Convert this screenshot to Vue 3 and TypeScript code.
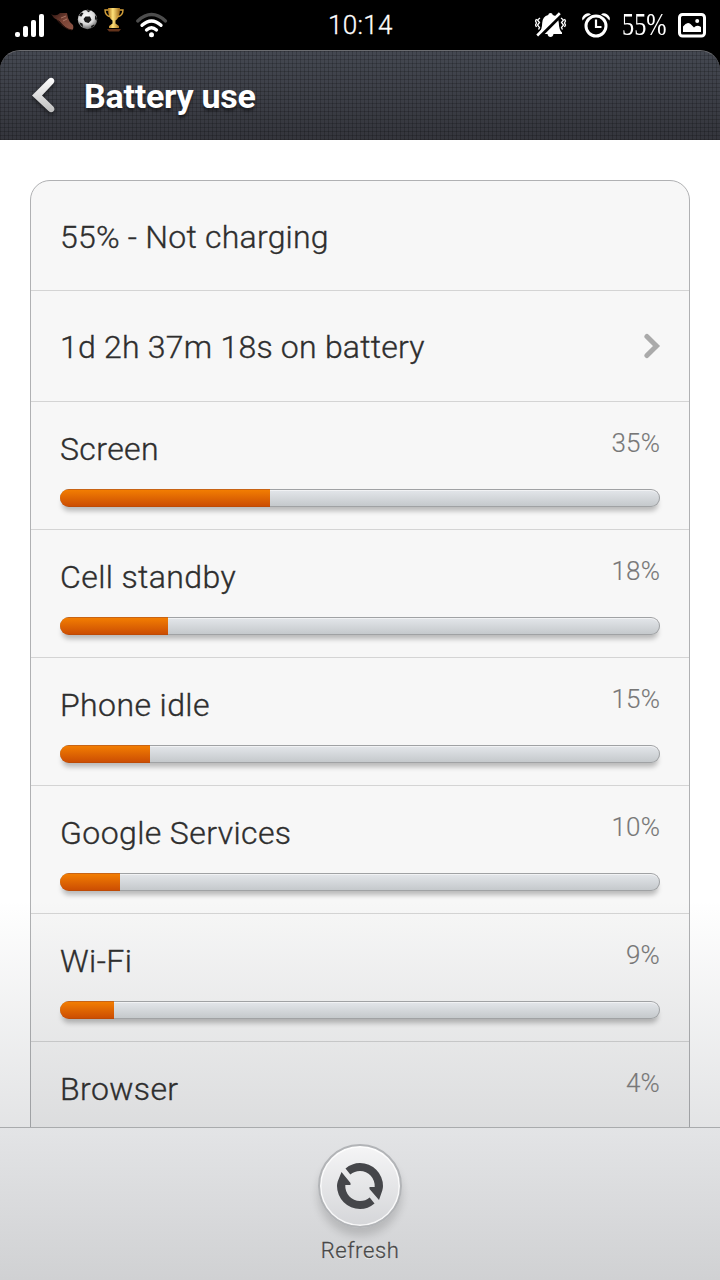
<script setup lang="ts">
interface Usage {
  name: string
  percent: number
}

const usages: Usage[] = [
  { name: 'Screen', percent: 35 },
  { name: 'Cell standby', percent: 18 },
  { name: 'Phone idle', percent: 15 },
  { name: 'Google Services', percent: 10 },
  { name: 'Wi-Fi', percent: 9 },
  { name: 'Browser', percent: 4 },
]
</script>

<template>
  <div class="phone">
    <header class="status">
      <svg class="status-left" width="180" height="50" viewBox="0 0 180 50">
        <defs>
          <linearGradient id="gold" x1="0" x2="1" y1="0" y2="0">
            <stop offset="0" stop-color="#a96f16" />
            <stop offset=".4" stop-color="#ffe27a" />
            <stop offset="1" stop-color="#9c6414" />
          </linearGradient>
          <linearGradient id="leather" x1="0" x2="1" y1="0" y2="1">
            <stop offset="0" stop-color="#2c1410" />
            <stop offset=".5" stop-color="#7a4335" />
            <stop offset="1" stop-color="#8d5546" />
          </linearGradient>
          <radialGradient id="ball" cx=".45" cy=".35" r=".65">
            <stop offset="0" stop-color="#fff" />
            <stop offset=".6" stop-color="#d8d8d8" />
            <stop offset="1" stop-color="#666" />
          </radialGradient>
        </defs>
        <g fill="#fff">
          <rect x="15" y="32" width="5" height="5" rx="2" />
          <rect x="23" y="26" width="5" height="11" rx="2" />
          <rect x="31" y="20" width="5" height="17" rx="2" />
          <rect x="39" y="14" width="5" height="23" rx="2" />
        </g>
        <path d="M51 14 Q56 17 60 13 L67 13 L68 18 Q69 22 73 25 Q74 29 72 30 Q68 30 63 25 Q59 20 54 18Z" fill="url(#leather)" />
        <path d="M61 18 l5 -2 M63 21 l4 -2" stroke="#b78170" stroke-width=".8" />
        <path d="M57 20 Q64 29 72 30" stroke="#321610" fill="none" />
        <circle cx="87.500" cy="19.500" r="9.700" fill="url(#ball)" />
        <path d="M85.500 16.500 L90 16.500 L91.500 20 L88.500 23 L85 22 L83.500 19Z M79 16 l2-3.500 2.500 .5 -2 3.500z M86 10.300 h5 l-2.500 2z M95 15 l2 3 -.5 3 -1.500-2z M79.500 22.500 l3 1 .5 3.500 q-3-1.500-3.500-4.500z M91 26 l3-1.500 .5 1 -3 2.500z" fill="#191919" />
        <path d="M108 8 h12 q0 10-4.500 12.500 v3 l3.500 2.500 v2 h-10 v-2 l3.500-2.500 v-3 Q108 18 108 8Z" fill="url(#gold)" />
        <path d="M108.500 10 h-3.500 q0 6 6 7 M119.500 10 h3.500 q0 6-6 7" fill="none" stroke="#d4a03b" stroke-width="1.400" />
        <path d="M107 29 h14 l-2 2.500 h-10z" fill="#63331b" />
        <g fill="none" stroke="#fff" stroke-linecap="round" stroke-width="3.300">
          <path d="M137.700 21 Q151.500 8.200 165.500 21" stroke="#4d4d4d" />
          <path d="M142 25.300 Q151.500 16.500 161 25.300" />
          <path d="M146.500 30 Q151.500 25.500 156.500 30" />
        </g>
        <circle cx="151.500" cy="34.700" r="2.500" fill="#fff" />
      </svg>
      <span class="clock">10:14</span>
      <div class="status-right">
        <svg width="32" height="26" viewBox="0 0 32 26">
          <path d="M15.500 1 Q17.500 1 17.800 3 Q23.500 4.500 23.800 11 Q24 18 27 20.500 V22 H18.500 Q18 25 15.500 25 Q13 25 12.500 22 H4 V20.500 Q7 18 7.200 11 Q7.500 4.500 13.200 3 Q13.500 1 15.500 1Z" fill="#fff" />
          <path d="M3.800 24.800 L26.500 2.200" stroke="#000" stroke-width="4.400" />
          <path d="M2.200 23.500 L24.800 1.300" stroke="#fff" stroke-width="2.600" />
          <path d="M5 6 l-2.500 2 2 2.500 -2 2.500 2 2.500 -1 2 M1.500 7 l-1 2 1 2 -1 2 1 2 M26 6 l2.500 2 -2 2.500 2 2.500 -2 2.500 1 2 M29.500 7 l1 2 -1 2 1 2 -1 2" fill="none" stroke="#fff" stroke-width="1.300" />
        </svg>
        <svg class="alarm" width="30" height="26" viewBox="0 0 30 26">
          <circle cx="15" cy="14" r="10" fill="none" stroke="#fff" stroke-width="3" />
          <path d="M15 7.500 V15 H20.500" fill="none" stroke="#fff" stroke-width="2.200" />
          <path d="M1.500 8.500 Q0 5 4 2.200 Q7.500 0 10 2.500 Q4.800 4.200 1.500 8.500Z M28.500 8.500 Q30 5 26 2.200 Q22.500 0 20 2.500 Q25.200 4.200 28.500 8.500Z" fill="#fff" />
        </svg>
        <span class="charge"><span class="charge-text">55%</span></span>
        <svg width="28" height="25" viewBox="0 0 28 25">
          <rect x="1.500" y="1.500" width="25" height="21.500" rx="3" fill="none" stroke="#fff" stroke-width="3" />
          <path d="M5 19 V13.500 Q9 8 12.500 11 L16 14.500 Q18.500 11.500 23 14 V19Z" fill="#fff" />
          <circle cx="19.200" cy="8" r="2" fill="#fff" />
        </svg>
      </div>
    </header>

    <div class="title-bar">
      <svg class="back" width="26" height="40" viewBox="0 0 26 40">
        <defs>
          <linearGradient id="chevron" x1="0" x2="0" y1="0" y2="1">
            <stop offset="0" stop-color="#fff" />
            <stop offset="1" stop-color="#bdbdbd" />
          </linearGradient>
        </defs>
        <path d="M17.500 3 Q20 .8 22.200 2.600 Q24.500 5 22.300 7.600 L11 19.500 L22.300 30.600 Q24.500 33.200 22.500 35.300 Q20 37.500 17.500 35 L1 19.500Z" fill="url(#chevron)" />
      </svg>
      <h1>Battery use</h1>
    </div>

    <main class="content">
      <section class="card">
        <div class="row summary"><span>55% - Not charging</span></div>
        <div class="row since">
          <span>1d 2h 37m 18s on battery</span>
          <svg class="more" width="17" height="26" viewBox="0 0 17 26">
            <path d="M2.900 3.500 L12.500 13 L2.900 22.500" fill="none" stroke="#aaa" stroke-width="5" stroke-linecap="round" />
          </svg>
        </div>
        <div v-for="item in usages" :key="item.name" class="usage">
          <div class="labels">
            <span class="name">{{ item.name }}</span>
            <span class="percent">{{ item.percent }}%</span>
          </div>
          <div class="track">
            <div class="fill" :style="{ width: item.percent + '%' }"></div>
          </div>
        </div>
      </section>
      <div class="shade"></div>
    </main>

    <footer class="toolbar">
      <button class="refresh" aria-label="Refresh">
        <svg width="48" height="48" viewBox="0 0 48 48" fill="#45464a">
          <path d="M9.500 6.500 Q16 1 24 1 A23 23 0 0 1 47 24 Q47 26 46.300 28.500 L43 38 L33.500 27 V25 H38.700 A15 15 0 0 0 24 9 Q18.500 9 14.300 12.500Z" />
          <path d="M38.500 41.500 Q32 47 24 47 A23 23 0 0 1 1 24 Q1 22 1.700 19.500 L5.500 10 L14.500 21 V23 H9.300 A15 15 0 0 0 24 39 Q29.500 39 33.700 35.500Z" />
        </svg>
      </button>
      <span class="refresh-label">Refresh</span>
    </footer>
  </div>
</template>

<style>
body {
  margin: 0;
  background: #000;
}
</style>

<style scoped>
.phone {
  width: 720px;
  height: 1280px;
  display: flex;
  flex-direction: column;
  overflow: hidden;
  background: #000;
  font-family: Roboto, "Noto Sans", sans-serif;
}
.status {
  height: 50px;
  flex: none;
  display: grid;
  grid-template-columns: 180px 1fr 185px;
  color: #fff;
}
.clock {
  padding-left: 148px;
  font-size: 26px;
  font-weight: 300;
  line-height: 50px;
  letter-spacing: 0.3px;
  -webkit-text-stroke: 0.3px #fff;
}
.status-right {
  display: flex;
  align-items: center;
}
.alarm {
  margin-left: 14px;
}
.charge {
  width: 45px;
  margin: 0 11px 2px;
  font: 32px/48px "Liberation Serif", serif;
}
.charge-text {
  display: inline-block;
  transform: scaleX(0.76);
  transform-origin: left;
}
.title-bar {
  box-sizing: border-box;
  height: 90px;
  flex: none;
  display: flex;
  align-items: center;
  padding-left: 31px;
  border-top: 1px solid #6b6c70;
  border-radius: 20px 20px 0 0;
  background:
    repeating-linear-gradient(0deg, rgba(0, 0, 0, 0.18) 0 1px, transparent 1px 4px),
    repeating-linear-gradient(90deg, rgba(0, 0, 0, 0.18) 0 1px, transparent 1px 4px),
    linear-gradient(#444851, #34353c);
}
.back {
  filter: drop-shadow(0 2px 2px rgba(0, 0, 0, 0.5));
}
h1 {
  margin: 0 0 0 27px;
  color: #fff;
  font-size: 34px;
  font-weight: 700;
  line-height: 44px;
  letter-spacing: -0.25px;
  text-shadow: 0 3px 3px rgba(0, 0, 0, 0.5);
}
.content {
  position: relative;
  height: 987px;
  flex: none;
  box-sizing: border-box;
  padding: 40px 30px 0;
  overflow: hidden;
  background: #fff;
}
.card {
  box-sizing: border-box;
  height: 1100px;
  border: 1px solid #b0b1b3;
  border-radius: 20px;
  background: #f7f7f7;
  color: #2e2e2e;
  font-size: 32px;
  font-weight: 300;
  letter-spacing: 0.23px;
  -webkit-text-stroke: 0.35px currentColor;
}
.row {
  box-sizing: border-box;
  display: flex;
  align-items: center;
  justify-content: space-between;
  padding: 2px 28px 0 29px;
  border-bottom: 1px solid #d4d4d4;
}
.summary {
  height: 110px;
}
.since {
  height: 111px;
}
.more {
  margin-bottom: 2px;
}
.usage {
  box-sizing: border-box;
  height: 128px;
  padding: 25px 29px 0;
  border-bottom: 1px solid #d4d4d4;
}
.labels {
  position: relative;
  z-index: 1;
  height: 62px;
  display: flex;
  justify-content: space-between;
}
.name {
  line-height: 44px;
  letter-spacing: 0.4px;
}
.percent {
  color: #777;
  font-size: 26px;
  line-height: 33px;
  letter-spacing: 0.15px;
  -webkit-text-stroke-width: 0.15px;
}
.track {
  position: relative;
  z-index: 1;
  box-sizing: border-box;
  height: 18px;
  border-radius: 9px;
  background: linear-gradient(#e5e8ec, #c3c7ca);
  box-shadow:
    inset 0 0 0 1px #a0a2a4,
    inset 0 2px 0 #f1f2f4,
    0 6px 5px -2px rgba(0, 0, 0, 0.25);
  overflow: hidden;
}
.fill {
  height: 18px;
  background: linear-gradient(#c86415 0 1px, #f27d02 1px, #cc4e03 17px, #be4a05 17px);
}
.shade {
  position: absolute;
  inset: auto 0 0;
  height: 227px;
  pointer-events: none;
  background: linear-gradient(rgba(45, 52, 62, 0), rgba(45, 52, 62, 0.135));
}
.toolbar {
  box-sizing: border-box;
  height: 153px;
  flex: none;
  display: flex;
  flex-direction: column;
  align-items: center;
  padding-top: 16px;
  border-top: 1px solid #a9abad;
  background: linear-gradient(#e3e4e6, #d0d1d3);
}
.refresh {
  box-sizing: border-box;
  width: 84px;
  height: 84px;
  padding: 0;
  display: grid;
  place-items: center;
  border: 2px solid #b2b4b7;
  border-radius: 50%;
  background: linear-gradient(#f5f5f6, #d5d6d9);
  box-shadow:
    inset 0 0 0 1.5px rgba(255, 255, 255, 0.8),
    0 8px 8px rgba(0, 0, 0, 0.15);
}
.refresh-label {
  margin-top: 8px;
  color: #484848;
  font-size: 22px;
  font-weight: 300;
  line-height: 30px;
  letter-spacing: 0.6px;
  text-shadow: 0 1px 0 #f5f5f5;
  -webkit-text-stroke: 0.3px #484848;
}
</style>
